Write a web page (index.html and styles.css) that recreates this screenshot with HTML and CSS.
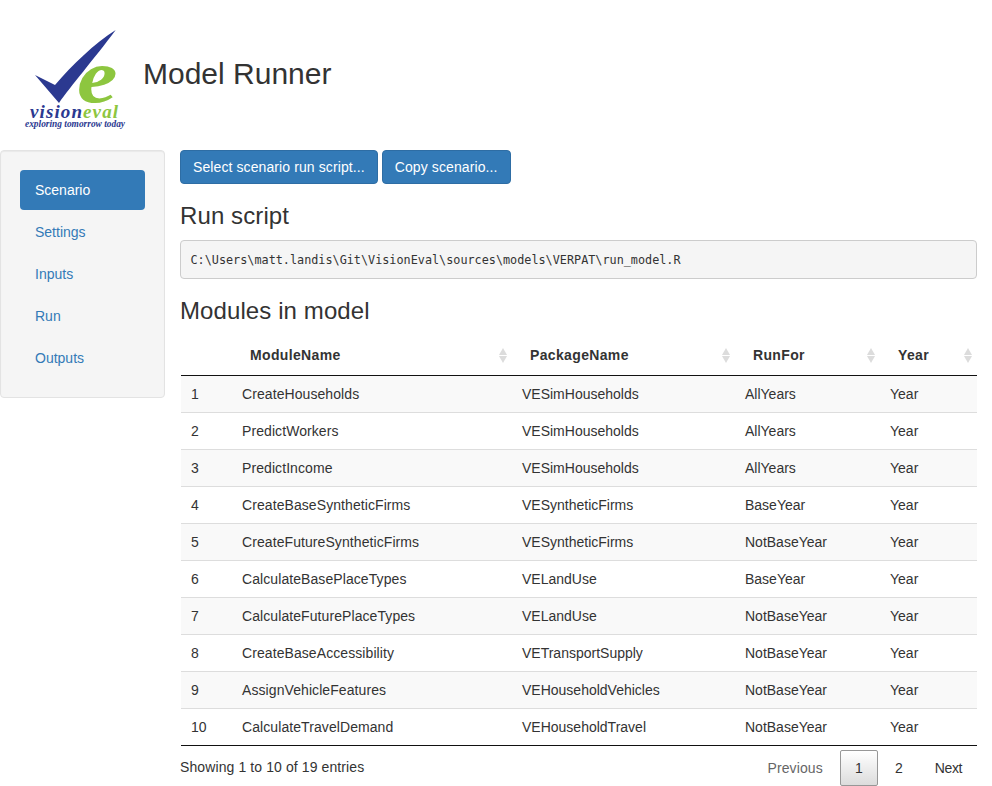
FILE: index.html
```html
<!DOCTYPE html>
<html lang="en">
<head>
    <meta charset="UTF-8" />
    <title>Model Runner</title>
    <link rel="stylesheet" href="styles.css">
</head>
<body>

<div class="title-bar">
    <svg class="logo" viewBox="0 0 120 120" width="120" height="120" role="img" aria-label="VisionEval logo">
        <path class="logo-check" d="M105.700 15 C85 28 62 50 45 70 L25 60 L49 88 C60 72 84 44 105.700 15 Z" />
        <text class="logo-e" transform="translate(67 87) scale(1.200 1)">e</text>
        <text class="logo-vision" x="20" y="103">vision<tspan class="logo-eval">eval</tspan></text>
        <text class="logo-tag" x="15" y="112">exploring tomorrow today</text>
    </svg>
    <h2 class="app-title">Model Runner</h2>
</div>

<div class="layout">
    <div class="well">
        <ul class="nav-pills">
            <li class="active"><a href="#">Scenario</a></li>
            <li><a href="#">Settings</a></li>
            <li><a href="#">Inputs</a></li>
            <li><a href="#">Run</a></li>
            <li><a href="#">Outputs</a></li>
        </ul>
    </div>

    <div class="main">
        <div class="btn-row">
            <button class="btn" type="button">Select scenario run script...</button>
            <button class="btn" type="button">Copy scenario...</button>
        </div>

        <h3>Run script</h3>
        <pre>C:\Users\matt.landis\Git\VisionEval\sources\models\VERPAT\run_model.R</pre>

        <h3>Modules in model</h3>
        <table class="modules">
            <colgroup>
                <col class="col-num">
                <col class="col-module">
                <col class="col-package">
                <col class="col-runfor">
                <col class="col-year">
            </colgroup>
            <thead>
                <tr>
                    <th class="no-sort"></th>
                    <th>ModuleName</th>
                    <th>PackageName</th>
                    <th>RunFor</th>
                    <th>Year</th>
                </tr>
            </thead>
            <tbody>
                <tr><td>1</td><td>CreateHouseholds</td><td>VESimHouseholds</td><td>AllYears</td><td>Year</td></tr>
                <tr><td>2</td><td>PredictWorkers</td><td>VESimHouseholds</td><td>AllYears</td><td>Year</td></tr>
                <tr><td>3</td><td>PredictIncome</td><td>VESimHouseholds</td><td>AllYears</td><td>Year</td></tr>
                <tr><td>4</td><td>CreateBaseSyntheticFirms</td><td>VESyntheticFirms</td><td>BaseYear</td><td>Year</td></tr>
                <tr><td>5</td><td>CreateFutureSyntheticFirms</td><td>VESyntheticFirms</td><td>NotBaseYear</td><td>Year</td></tr>
                <tr><td>6</td><td>CalculateBasePlaceTypes</td><td>VELandUse</td><td>BaseYear</td><td>Year</td></tr>
                <tr><td>7</td><td>CalculateFuturePlaceTypes</td><td>VELandUse</td><td>NotBaseYear</td><td>Year</td></tr>
                <tr><td>8</td><td>CreateBaseAccessibility</td><td>VETransportSupply</td><td>NotBaseYear</td><td>Year</td></tr>
                <tr><td>9</td><td>AssignVehicleFeatures</td><td>VEHouseholdVehicles</td><td>NotBaseYear</td><td>Year</td></tr>
                <tr><td>10</td><td>CalculateTravelDemand</td><td>VEHouseholdTravel</td><td>NotBaseYear</td><td>Year</td></tr>
            </tbody>
        </table>

        <div class="table-footer">
            <div class="table-info">Showing 1 to 10 of 19 entries</div>
            <div class="pager">
                <a class="page disabled" href="#">Previous</a>
                <a class="page current" href="#">1</a>
                <a class="page" href="#">2</a>
                <a class="page next" href="#">Next</a>
            </div>
        </div>
    </div>
</div>

</body>
</html>
```

FILE: styles.css
```css
* {
    box-sizing: border-box;
}
body {
    margin: 0;
    font-family: "Liberation Sans", Arial, sans-serif;
    font-size: 14px;
    line-height: 20px;
    color: #333;
    background-color: #fff;
}

/* header */
.title-bar {
    display: flex;
    align-items: center;
    height: 150px;
    padding-left: 10px;
}
.logo {
    flex: none;
}
.logo-check {
    fill: #2b3990;
}
.logo-e {
    font-family: "Liberation Serif", serif;
    font-style: italic;
    font-weight: bold;
    font-size: 76px;
    fill: #8dc63f;
}
.logo-vision {
    font-family: "Liberation Serif", serif;
    font-style: italic;
    font-weight: bold;
    font-size: 19px;
    letter-spacing: 1.100px;
    fill: #2b3990;
}
.logo-eval {
    fill: #8dc63f;
}
.logo-tag {
    font-family: "Liberation Serif", serif;
    font-style: italic;
    font-weight: bold;
    font-size: 9.400px;
    fill: #2b3990;
}
.app-title {
    margin: 0 0 4px 13px;
    font-size: 30px;
    font-weight: 500;
    line-height: 33px;
}

/* page columns */
.layout {
    display: flex;
    align-items: flex-start;
    gap: 15px;
    padding-right: 15px;
}
.well {
    flex: none;
    width: 165px;
    padding: 19px;
    background-color: #f5f5f5;
    border: 1px solid #e3e3e3;
    border-radius: 4px;
    box-shadow: inset 0 1px 1px rgba(0, 0, 0, .05);
}
.main {
    flex: 1;
    min-width: 0;
}

/* sidebar nav */
.nav-pills {
    list-style: none;
    margin: 0;
    padding: 0;
    display: flex;
    flex-direction: column;
    gap: 2px;
}
.nav-pills a {
    display: block;
    padding: 10px 15px;
    color: #337ab7;
    text-decoration: none;
    border-radius: 4px;
}
.nav-pills .active a {
    color: #fff;
    background-color: #337ab7;
}

/* main column */
.btn-row {
    display: flex;
    gap: 4px;
}
.btn {
    padding: 6px 12px;
    font-family: inherit;
    font-size: 14px;
    line-height: 20px;
    letter-spacing: .1px;
    color: #fff;
    background-color: #337ab7;
    border: 1px solid #2e6da4;
    border-radius: 4px;
}
h3 {
    margin: 19px 0 11px;
    font-size: 24px;
    font-weight: 500;
    line-height: 26px;
    letter-spacing: .1px;
}
pre {
    margin: 0 0 10px;
    padding: 9.500px;
    font-family: "DejaVu Sans Mono", "Liberation Mono", monospace;
    font-size: 11.800px;
    line-height: 18px;
    color: #333;
    background-color: #f5f5f5;
    border: 1px solid #ccc;
    border-radius: 4px;
}

/* table */
.modules {
    width: 796px;
    margin-left: 1px;
    border-collapse: separate;
    border-spacing: 0;
    table-layout: fixed;
}
.col-num {
    width: 51px;
}
.col-module {
    width: 280px;
}
.col-package {
    width: 223px;
}
.col-runfor {
    width: 145px;
}
.col-year {
    width: 97px;
}
.modules th {
    position: relative;
    padding: 10px 18px;
    text-align: left;
    font-weight: bold;
    letter-spacing: .35px;
    border-bottom: 1px solid #111;
}
/* sort arrows */
.modules th::before,
.modules th::after {
    content: "";
    position: absolute;
    right: 5px;
    border-left: 4.500px solid transparent;
    border-right: 4.500px solid transparent;
}
.modules th::before {
    top: 13px;
    border-bottom: 7px solid #dcdcdc;
}
.modules th::after {
    top: 21px;
    border-top: 7px solid #dcdcdc;
}
.modules th.no-sort::before,
.modules th.no-sort::after {
    display: none;
}
.modules td {
    padding: 8px 10px;
    border-top: 1px solid #ddd;
}
.modules td:nth-child(2) {
    letter-spacing: .08px;
}
.modules tbody tr:first-child td {
    border-top: none;
}
.modules tbody tr:nth-child(odd) {
    background-color: #f9f9f9;
}
.modules tbody tr:last-child td {
    border-bottom: 1px solid #111;
}

/* under the table */
.table-footer {
    display: flex;
    justify-content: space-between;
    padding-top: 4px;
}
.table-info {
    padding-top: 7px;
    letter-spacing: .1px;
}
.pager {
    display: flex;
    gap: 2px;
}
.page {
    min-width: 38px;
    padding: 7px 14px;
    text-align: center;
    color: #333;
    text-decoration: none;
    border: 1px solid transparent;
    border-radius: 2px;
}
.page.disabled {
    color: #666;
    letter-spacing: .1px;
}
.page.next {
    letter-spacing: -.4px;
}
.page.current {
    background: linear-gradient(to bottom, #fff 0%, #dcdcdc 100%);
    border-color: #979797;
}
```
